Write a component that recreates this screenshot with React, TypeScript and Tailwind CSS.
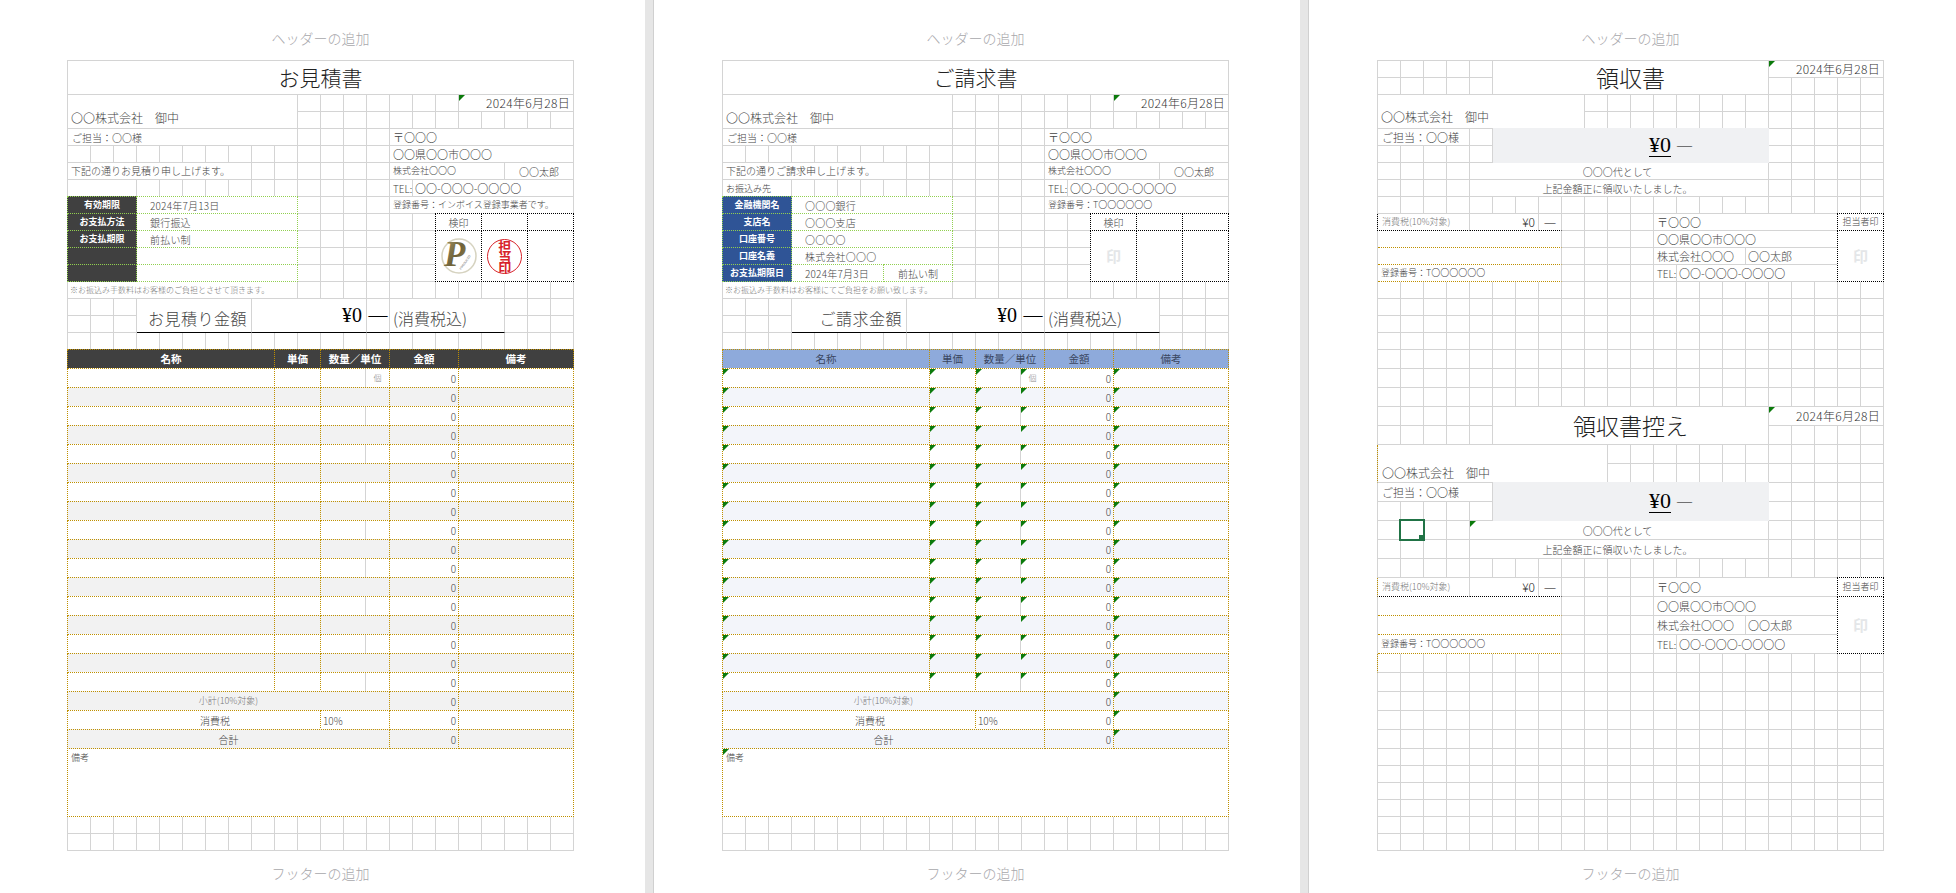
import React from "react";
import { twMerge } from "tailwind-merge";

type Kind = "plain" | "gold" | "green" | "black" | "goldB" | "blackB" | "lineB" | "none";

type Cell = {
    c: number;
    r: number;
    cs?: number;
    rs?: number;
    kind?: Kind;
    cls?: string;
    tri?: boolean;
    children?: React.ReactNode;
};

const KIND_CLASS: Record<Kind, string> = {
    plain: "border-r border-b border-[#d4d4d4]",
    gold: "z-10 -ml-px -mt-px border border-dotted border-[#bf9000] bg-white",
    green: "z-10 -ml-px -mt-px border border-dotted border-[#92d050] bg-white",
    black: "z-10 -ml-px -mt-px border border-dotted border-black bg-white",
    goldB: "border-r border-r-[#d4d4d4] border-b border-b-[#bf9000] [border-bottom-style:dotted]",
    blackB: "border-r border-r-[#d4d4d4] border-b border-b-black [border-bottom-style:dotted]",
    lineB: "border-r border-r-[#d4d4d4] border-b border-b-black",
    none: "border-r border-r-transparent border-b border-b-transparent",
};

const DARK_HEADER = "bg-[#404040] text-white font-bold";
const BLUE_HEADER = "bg-[#8eaadb] text-[#3a4660] font-normal";
const ITEM_COLS = [
    [1, 9],
    [10, 2],
    [12, 3],
    [15, 3],
    [18, 5],
];

function Tri() {
    return (
        <span className="absolute left-0 top-0 h-0 w-0 border-r-[6px] border-t-[6px] border-r-transparent border-t-[#0b7a0b]" />
    );
}

function Sheet({ cells, rowCount, className }: { cells: Cell[]; rowCount: number; className: string }) {
    const taken = new Set<string>();
    cells.forEach((cell) => {
        for (let r = cell.r; r < cell.r + (cell.rs ?? 1); r++) {
            for (let c = cell.c; c < cell.c + (cell.cs ?? 1); c++) taken.add(`${c}-${r}`);
        }
    });

    const blanks: Cell[] = [];
    for (let r = 1; r <= rowCount; r++) {
        for (let c = 1; c <= 22; c++) {
            if (!taken.has(`${c}-${r}`)) blanks.push({ c, r });
        }
    }

    return (
        <div className={twMerge("grid border-l border-t border-[#d4d4d4]", className)}>
            {[...blanks, ...cells].map((cell) => (
                <div
                    key={`${cell.c}-${cell.r}`}
                    className={twMerge(
                        "relative flex min-w-0 items-center whitespace-nowrap text-[10px] text-[#444]",
                        KIND_CLASS[cell.kind ?? "plain"],
                        cell.cls,
                    )}
                    style={{
                        gridColumn: `${cell.c} / span ${cell.cs ?? 1}`,
                        gridRow: `${cell.r} / span ${cell.rs ?? 1}`,
                    }}
                >
                    {cell.tri && <Tri />}
                    {cell.children}
                </div>
            ))}
        </div>
    );
}

function Page({ width, left, children }: { width: string; left: string; children: React.ReactNode }) {
    return (
        <section className={twMerge("flex h-[893px] shrink-0 flex-col bg-white", width, left)}>
            <div className="flex h-[60px] w-[507px] items-center justify-center pt-[16px] text-[14px] text-[#a8a8ac]">
                ヘッダーの追加
            </div>
            {children}
            <div className="flex h-[42px] w-[507px] items-center justify-center pt-[2px] text-[14px] text-[#a8a8ac]">
                フッターの追加
            </div>
        </section>
    );
}

function Seal() {
    return (
        <svg width="40" height="40" viewBox="0 0 40 40">
            <defs>
                <linearGradient id="sealGold" x1="0" y1="0" x2="1" y2="1">
                    <stop offset="0%" stopColor="#a89a6e" />
                    <stop offset="55%" stopColor="#6f6238" />
                    <stop offset="100%" stopColor="#9a8d62" />
                </linearGradient>
            </defs>
            <circle cx="20" cy="20" r="17" fill="#fff" stroke="#d6d3c0" strokeWidth="1.5" />
            <text x="5" y="30" fontFamily="Liberation Serif" fontStyle="italic" fontWeight="bold" fontSize="35" fill="url(#sealGold)">
                P
            </text>
            <text x="22" y="34" fontFamily="Liberation Sans" fontSize="3" fill="#555" transform="rotate(-55 22 34)">
                PRODUCED
            </text>
        </svg>
    );
}

function RedStamp() {
    return (
        <div className="flex h-[35px] w-[35px] items-center justify-center rounded-full border border-[#d8232a] bg-white text-[13px] font-bold tracking-[-2.5px] text-[#d8232a] [writing-mode:vertical-rl]">
            担当印
        </div>
    );
}

function Faint() {
    return <span className="text-[15px] font-bold text-[#e4e6e8]">印</span>;
}

function Qty({ unit, tri, line }: { unit?: string; tri?: boolean; line: boolean }) {
    return (
        <div className="flex h-full w-full">
            <div className={line ? "w-[45px] border-r border-[#d4d4d4]" : "w-[45px]"} />
            <div className="relative flex flex-1 items-center justify-center text-[8px] text-[#888]">
                {tri && <Tri />}
                {unit}
            </div>
        </div>
    );
}

type DocConfig = {
    title: string;
    message: string;
    labels: string[];
    labelClass: string;
    values: Cell[];
    regNo: string;
    note: string;
    amountLabel: string;
    above?: string;
    stamps: React.ReactNode[];
    headClass: string;
    stripe: string;
    tris: boolean;
};

function docCells(d: DocConfig): Cell[] {
    const cells: Cell[] = [
        { c: 1, r: 1, cs: 22, cls: "justify-center text-[21px] text-[#222]", children: d.title },
        { c: 1, r: 2, cs: 10, rs: 2, cls: "items-end pb-px pl-[3px] text-[12px]", children: "〇〇株式会社　御中" },
        {
            c: 18,
            r: 2,
            cs: 5,
            tri: true,
            cls: "justify-end pr-[3px] text-[12px] tracking-[0.3px] text-[#333]",
            children: "2024年6月28日",
        },
        { c: 1, r: 4, cs: 10, cls: "pl-[4px]", children: "ご担当：〇〇様" },
        { c: 15, r: 4, cs: 8, cls: "pl-[3px] text-[11px]", children: "〒〇〇〇" },
        { c: 15, r: 5, cs: 8, cls: "pl-[3px] text-[11px]", children: "〇〇県〇〇市〇〇〇" },
        { c: 1, r: 6, cs: 8, cls: "pb-px pl-[3px]", children: d.message },
        { c: 15, r: 6, cs: 5, cls: "pl-[3px] text-[9px]", children: "株式会社〇〇〇" },
        { c: 20, r: 6, cs: 3, cls: "pl-[14px]", children: "〇〇太郎" },
        { c: 1, r: 7, cs: 3, cls: "items-end pb-px pl-[3px] text-[9px]", children: d.above },
        { c: 15, r: 7, cls: "pl-[3px]", children: "TEL:" },
        { c: 16, r: 7, cs: 7, cls: "pl-[2px] text-[11px]", children: "〇〇-〇〇〇-〇〇〇〇" },
        { c: 15, r: 8, cs: 8, cls: "pl-[3px] text-[9px]", children: d.regNo },
        { c: 17, r: 9, cs: 2, kind: "black", cls: "justify-center", children: "検印" },
        { c: 19, r: 9, cs: 2, kind: "black" },
        { c: 21, r: 9, cs: 2, kind: "black" },
        { c: 17, r: 10, cs: 2, rs: 3, kind: "black", cls: "justify-center", children: d.stamps[0] },
        { c: 19, r: 10, cs: 2, rs: 3, kind: "black", cls: "justify-center", children: d.stamps[1] },
        { c: 21, r: 10, cs: 2, rs: 3, kind: "black" },
        { c: 1, r: 13, cs: 10, cls: "pl-[2px] text-[8px] text-[#777]", children: d.note },
        { c: 4, r: 14, cs: 5, rs: 2, kind: "lineB", cls: "justify-end pr-[4px] pt-[4px] text-[16px] tracking-[0.5px]", children: d.amountLabel },
        {
            c: 9,
            r: 14,
            cs: 5,
            rs: 2,
            kind: "lineB",
            cls: "justify-end pb-px pr-[4px] font-['Liberation_Serif',serif] text-[20px] text-black",
            children: "¥0",
        },
        { c: 14, r: 14, rs: 2, kind: "lineB", cls: "justify-center font-['Liberation_Serif',serif] text-[19px] text-black", children: "—" },
        { c: 15, r: 14, cs: 5, rs: 2, kind: "lineB", cls: "pl-[3px] pt-[4px] text-[16px]", children: "(消費税込)" },
        {
            c: 1,
            r: 38,
            cs: 22,
            rs: 4,
            kind: "gold",
            tri: d.tris,
            cls: "items-start pl-[3px] pt-[2px] text-[9px]",
            children: "備考",
        },
        ...d.values,
    ];

    d.labels.forEach((label, i) => {
        cells.push({ c: 1, r: 8 + i, cs: 3, kind: "green", cls: twMerge("justify-center text-[9px]", d.labelClass), children: label });
    });

    ["名称", "単価", "数量／単位", "金額", "備考"].forEach((label, i) => {
        const [c, cs] = ITEM_COLS[i];
        cells.push({ c, r: 17, cs, kind: "gold", cls: twMerge("justify-center text-[10.5px]", d.headClass), children: label });
    });

    for (let n = 0; n < 17; n++) {
        const r = 18 + n;
        const bg = n % 2 === 1 ? d.stripe : "";
        ITEM_COLS.forEach(([c, cs], i) => {
            const isQty = i === 2;
            const isAmount = i === 3;
            cells.push({
                c,
                r,
                cs,
                kind: "gold",
                tri: d.tris && !isAmount,
                cls: twMerge(bg, isAmount && "justify-end pr-[2px]"),
                children: isQty ? <Qty unit={n === 0 ? "個" : undefined} tri={d.tris} line={n % 2 === 0} /> : isAmount ? "0" : undefined,
            });
        });
    }

    [35, 36, 37].forEach((r, i) => {
        const bg = i === 1 ? "" : d.stripe;
        if (i === 1) {
            cells.push({ c: 1, r, cs: 11, kind: "gold", cls: "justify-center pl-[42px] text-[10px]", children: "消費税" });
            cells.push({ c: 12, r, cs: 3, kind: "gold", cls: "pl-[2px]", children: "10%" });
        } else {
            cells.push({
                c: 1,
                r,
                cs: 14,
                kind: "gold",
                cls: twMerge("justify-center", bg, i === 0 && "text-[9px] text-[#777]"),
                children: i === 0 ? "小計(10%対象)" : "合計",
            });
        }
        cells.push({ c: 15, r, cs: 3, kind: "gold", cls: twMerge("justify-end pr-[2px]", bg), children: "0" });
        cells.push({ c: 18, r, cs: 5, kind: "gold", tri: d.tris, cls: bg });
    });

    return cells;
}

const greenValue = "pl-[13px] tracking-[0.2px]";

const estimate: DocConfig = {
    title: "お見積書",
    message: "下記の通りお見積り申し上げます。",
    labels: ["有効期限", "お支払方法", "お支払期限", "", ""],
    labelClass: DARK_HEADER,
    values: [
        { c: 4, r: 8, cs: 7, kind: "green", cls: greenValue, children: "2024年7月13日" },
        { c: 4, r: 9, cs: 7, kind: "green", cls: greenValue, children: "銀行振込" },
        { c: 4, r: 10, cs: 7, kind: "green", cls: greenValue, children: "前払い制" },
        { c: 4, r: 11, cs: 7, kind: "green" },
        { c: 4, r: 12, cs: 7, kind: "green" },
    ],
    regNo: "登録番号：インボイス登録事業者です。",
    note: "※お振込み手数料はお客様のご負担とさせて頂きます。",
    amountLabel: "お見積り金額",
    stamps: [<Seal key="seal" />, <RedStamp key="stamp" />],
    headClass: DARK_HEADER,
    stripe: "bg-[#f2f2f2]",
    tris: false,
};

const invoice: DocConfig = {
    title: "ご請求書",
    message: "下記の通りご請求申し上げます。",
    above: "お振込み先",
    labels: ["金融機関名", "支店名", "口座番号", "口座名義", "お支払期限日"],
    labelClass: "bg-[#2f5496] text-white font-bold",
    values: [
        { c: 4, r: 8, cs: 7, kind: "green", cls: greenValue, children: "〇〇〇銀行" },
        { c: 4, r: 9, cs: 7, kind: "green", cls: greenValue, children: "〇〇〇支店" },
        { c: 4, r: 10, cs: 7, kind: "green", cls: greenValue, children: "〇〇〇〇" },
        { c: 4, r: 11, cs: 7, kind: "green", cls: greenValue, children: "株式会社〇〇〇" },
        { c: 4, r: 12, cs: 4, kind: "green", cls: greenValue, children: "2024年7月3日" },
        { c: 8, r: 12, cs: 3, kind: "green", cls: "justify-center", children: "前払い制" },
    ],
    regNo: "登録番号：T〇〇〇〇〇〇",
    note: "※お振込み手数料はお客様にてご負担をお願い致します。",
    amountLabel: "ご請求金額",
    stamps: [<Faint key="faint" />, null],
    headClass: BLUE_HEADER,
    stripe: "bg-[#f3f5fa]",
    tris: true,
};

function receiptCells(t: number, copy: boolean): Cell[] {
    return [
        {
            c: 6,
            r: t,
            cs: 12,
            rs: 2,
            cls: "justify-center text-[23px] text-[#222]",
            children: copy ? "領収書控え" : "領収書",
        },
        {
            c: 18,
            r: t,
            cs: 5,
            tri: true,
            cls: "justify-end pr-[3px] text-[12px] tracking-[0.3px] text-[#333]",
            children: "2024年6月28日",
        },
        {
            c: 1,
            r: t + 2,
            cs: copy ? 10 : 9,
            rs: 2,
            cls: twMerge(
                "items-end pl-[3px] text-[12px]",
                copy ? "-ml-px border-l border-l-[#bf9000] pl-[4px] [border-left-style:dotted]" : "pb-[2px]",
            ),
            children: "〇〇株式会社　御中",
        },
        { c: 1, r: t + 4, cs: copy ? 5 : 4, cls: "pl-[4px] text-[11px]", children: "ご担当：〇〇様" },
        {
            c: 6,
            r: t + 4,
            cs: 12,
            rs: 2,
            kind: "none",
            cls: "z-10 -mt-px bg-[#f0f1f3] pl-[156px] font-['Liberation_Serif',serif] font-normal text-black",
            children: (
                <span className="flex items-center gap-[6px]">
                    <span className="border-b border-black text-[22px] leading-[23px]">¥0</span>
                    <span className="text-[15px]">—</span>
                </span>
            ),
        },
        { c: 5, r: t + 6, cs: 13, tri: copy, cls: "justify-center pr-[3px]", children: "〇〇〇代として" },
        { c: 5, r: t + 7, cs: 13, cls: "justify-center pr-[3px]", children: "上記金額正に領収いたしました。" },
        {
            c: 1,
            r: t + 9,
            cs: 4,
            kind: "blackB",
            cls: twMerge(
                "-ml-px border-l pl-[4px] text-[9px] text-[#777] [border-left-style:dotted]",
                copy ? "border-l-[#bf9000]" : "border-l-black",
            ),
            children: "消費税(10%対象)",
        },
        { c: 5, r: t + 9, cs: 3, kind: "blackB", cls: "justify-end pr-[3px] text-[12px] text-[#222]", children: "¥0" },
        {
            c: 8,
            r: t + 9,
            kind: "blackB",
            cls: "justify-center font-['Liberation_Serif',serif] text-[11px] font-normal text-black",
            children: "—",
        },
        { c: 13, r: t + 9, cs: 8, cls: "pl-[3px] text-[11px]", children: "〒〇〇〇" },
        { c: 21, r: t + 9, cs: 2, kind: "black", cls: "justify-center text-[9px]", children: "担当者印" },
        { c: 1, r: t + 10, cs: 8, kind: "goldB" },
        { c: 13, r: t + 10, cs: 8, cls: "pl-[3px] text-[11px]", children: "〇〇県〇〇市〇〇〇" },
        { c: 21, r: t + 10, cs: 2, rs: 3, kind: "black", cls: "justify-center", children: <Faint /> },
        { c: 1, r: t + 11, cs: 8, kind: "goldB" },
        { c: 13, r: t + 11, cs: 4, cls: "pl-[3px] text-[11px]", children: "株式会社〇〇〇" },
        { c: 17, r: t + 11, cs: 4, cls: "pl-[2px] text-[11px]", children: "〇〇太郎" },
        { c: 1, r: t + 12, cs: 8, kind: "goldB", cls: "pl-[3px] text-[9px]", children: "登録番号：T〇〇〇〇〇〇" },
        { c: 13, r: t + 12, cls: "pl-[3px]", children: "TEL:" },
        { c: 14, r: t + 12, cs: 7, cls: "pl-[2px] text-[11px]", children: "〇〇-〇〇〇-〇〇〇〇" },
    ];
}

// last gold-edged row of the copy still shows the normal grid lines
function RowLines() {
    return (
        <div className="grid h-full w-full grid-cols-[repeat(22,23px)]">
            {Array.from({ length: 22 }, (_, i) => (
                <div key={i} className="border-r border-[#d4d4d4]" />
            ))}
        </div>
    );
}

const receipt: Cell[] = [
    ...receiptCells(1, false),
    ...receiptCells(21, true),
    {
        c: 2,
        r: 27,
        cls: "z-20",
        children: (
            <>
                <span className="absolute -left-[2px] -top-[2px] h-[22px] w-[26px] border-2 border-[#217346]" />
                <span className="absolute -bottom-[2px] -right-[2px] h-[6px] w-[6px] bg-[#217346]" />
            </>
        ),
    },
    {
        c: 1,
        r: 34,
        cs: 22,
        cls: "-ml-px border-l border-l-[#bf9000] border-r-transparent border-b-[#d4d4d4] [border-left-style:dotted]",
        children: <RowLines />,
    },
];

const DOC_GRID = "w-[507px] grid-cols-[repeat(22,23px)] grid-rows-[34px_repeat(15,17px)_repeat(21,19px)_repeat(6,17px)]";
const RECEIPT_GRID = "w-[507px] grid-cols-[repeat(22,23px)] grid-rows-[repeat(17,17px)_repeat(21,19px)_repeat(6,17px)]";

export default function App() {
    return (
        <div className="flex h-[893px] w-[1956px] overflow-hidden bg-white font-['Noto_Sans_CJK_JP',sans-serif] font-light">
            <Page width="w-[645px]" left="pl-[67px]">
                <Sheet cells={docCells(estimate)} rowCount={43} className={DOC_GRID} />
            </Page>
            <div className="w-[9px] shrink-0 border-r border-[#d0d0d0] bg-[#e6e6e6]" />
            <Page width="w-[646px]" left="pl-[68px]">
                <Sheet cells={docCells(invoice)} rowCount={43} className={DOC_GRID} />
            </Page>
            <div className="w-[9px] shrink-0 border-r border-[#d0d0d0] bg-[#e6e6e6]" />
            <Page width="w-[647px]" left="pl-[68px]">
                <Sheet cells={receipt} rowCount={44} className={RECEIPT_GRID} />
            </Page>
        </div>
    );
}
